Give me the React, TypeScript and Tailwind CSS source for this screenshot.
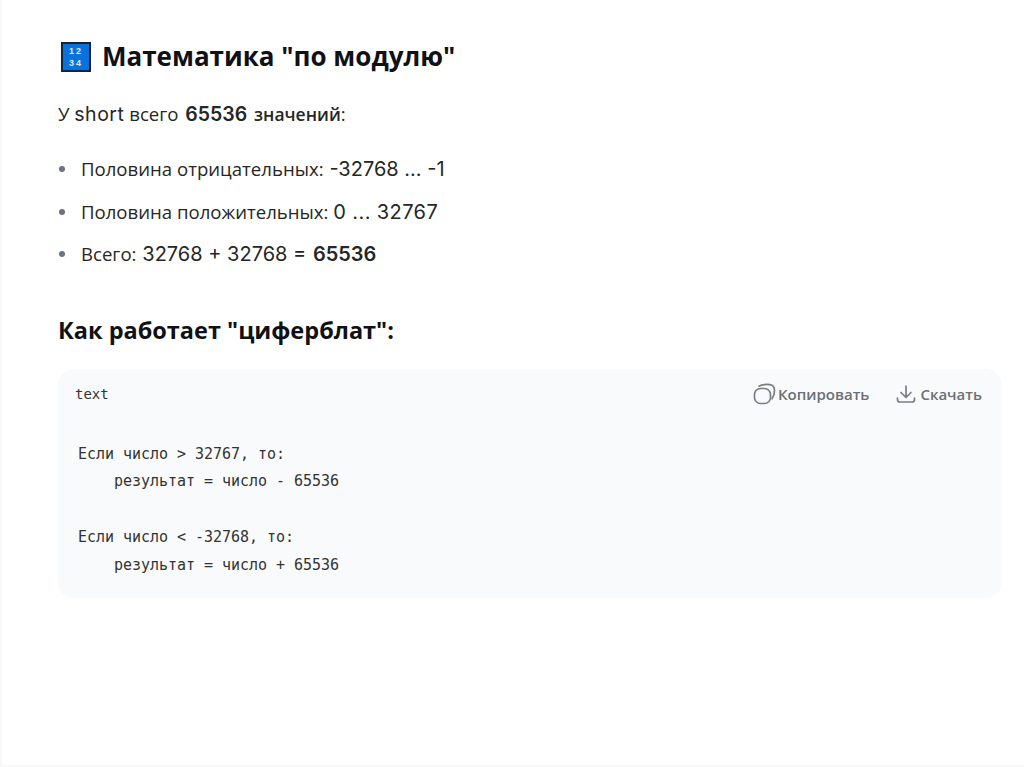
import React from "react";

const Num = ({ children, bold, size, cls }: { children: React.ReactNode; bold?: boolean; size?: boolean; cls?: string }) => (
  <span className={`font-['Inter',sans-serif] ${size ? "text-[19.5px]" : "text-[20px]"} ${bold ? "font-semibold" : ""} ${cls ?? ""}`}>{children}</span>
);

function Emoji() {
  return (
    <div className="w-[30px] h-[30px] bg-[#0a72dc] border-2 border-[#10253f] flex flex-col items-center justify-center text-[#dcecff] font-['Liberation_Sans',sans-serif] text-[9px] leading-[12px] font-bold tracking-[2px] shrink-0">
      <span>12</span>
      <span>34</span>
    </div>
  );
}

function Li({ children }: { children: React.ReactNode }) {
  return (
    <li className="flex items-center h-[42.5px]">
      <span className="w-[6px] h-[6px] rounded-full bg-[#6b7280] ml-[1px] mr-[16px]" />
      <span>{children}</span>
    </li>
  );
}

export default function App() {
  return (
    <div className="w-[1024px] h-[767px] overflow-hidden bg-white border-l-2 border-b-2 border-[#f8f8f8] text-[#1a1a1a] font-['Open_Sans','Noto_Sans',sans-serif]">
      <div className="pt-[40px] pl-[56px] pr-[22px]">
        <h1 className="flex items-center gap-[11px] h-[33px] text-[26px] font-bold text-[#0f1115] pl-[3px]">
          <Emoji />
          <span>Математика "по модулю"</span>
        </h1>
        <p className="mt-[25px] text-[18.6px] leading-[32px] text-[#262626]">
          У <span className="font-['Inter',sans-serif] text-[19.5px] tracking-[0.5px]">short</span> всего <Num bold size cls="ml-[2px]">65536</Num> <span className="font-semibold text-[17.5px] ml-[2px]">значений</span>:
        </p>
        <ul className="mt-[18px] text-[18.6px] text-[#262626]">
          <Li>Половина отрицательных: <Num cls="ml-[1px]">-32768 ... -1</Num></Li>
          <Li>Половина положительных: <span className="tracking-[0.4px]"><Num>0 ... 32767</Num></span></Li>
          <Li>Всего: <Num cls="ml-[1px]">32768 + 32768 = </Num><Num bold cls="ml-[1px]">65536</Num></Li>
        </ul>
        <h2 className="mt-[38px] text-[23.5px] leading-[32px] font-bold text-[#0f1115]">Как работает "циферблат":</h2>
        <div className="mt-[23px] h-[229px] rounded-[16px] bg-[#f9fafb] relative">
          <div className="flex items-center justify-between h-[51px] pl-[17px] pr-[20px]">
            <span className="font-['DejaVu_Sans_Mono',monospace] text-[14px] text-[#333]">text</span>
            <div className="flex items-center gap-[27px] text-[15px] text-[#6b6f76] font-semibold">
              <span className="flex items-center gap-[2px]">
                <svg width="23" height="22" viewBox="0 0 23 22" fill="none" stroke="#7a7e84" strokeWidth="1.7" strokeLinecap="round">
                  <rect x="1.5" y="5.5" width="16" height="15" rx="6" />
                  <path d="M6 3.2 c3 -1.5 8 -2 11 -1.5 c3 0.5 4.5 3 4.5 6 c0 3 -1 6 -2.5 8" />
                </svg>
                Копировать
              </span>
              <span className="flex items-center gap-[4px]">
                <svg width="20" height="20" viewBox="0 0 20 20" fill="none" stroke="#7a7e84" strokeWidth="1.7" strokeLinecap="round" strokeLinejoin="round">
                  <path d="M10 2 v11 M5 8.5 l5 5 l5 -5 M1.5 14 v1.5 a2.5 2.5 0 0 0 2.5 2.5 h12 a2.5 2.5 0 0 0 2.5 -2.5 v-1.5" />
                </svg>
                Скачать
              </span>
            </div>
          </div>
          <pre className="pl-[20px] pt-[21px] font-['DejaVu_Sans_Mono',monospace] text-[15px] leading-[27.8px] text-[#333] tracking-[-0.03px]">{`Если число > 32767, то:
    результат = число - 65536

Если число < -32768, то:
    результат = число + 65536`}</pre>
        </div>
      </div>
    </div>
  );
}
